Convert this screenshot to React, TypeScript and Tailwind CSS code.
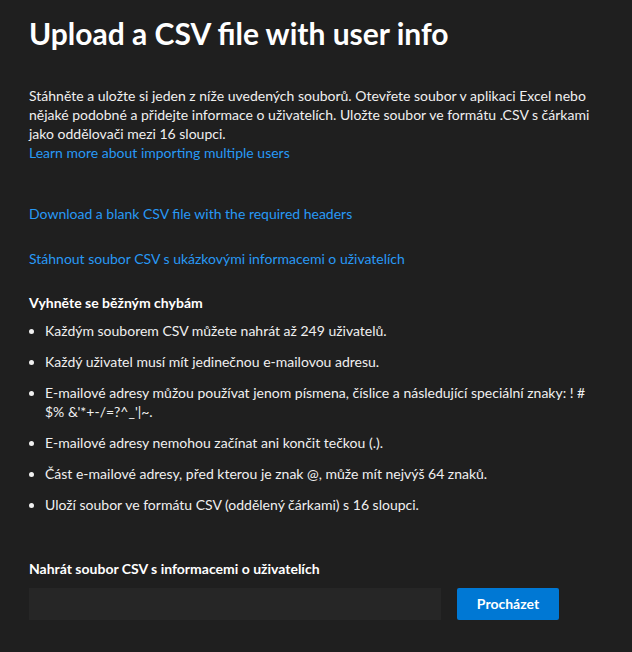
import React from "react";

const items: React.ReactNode[] = [
  "Každým souborem CSV můžete nahrát až 249 uživatelů.",
  "Každý uživatel musí mít jedinečnou e-mailovou adresu.",
  <>E-mailové adresy můžou používat jenom písmena, číslice a následující speciální znaky: ! #<br />$% &amp;'*+-/=?^_'|~.</>,
  "E-mailové adresy nemohou začínat ani končit tečkou (.).",
  "Část e-mailové adresy, před kterou je znak @, může mít nejvýš 64 znaků.",
  "Uloží soubor ve formátu CSV (oddělený čárkami) s 16 sloupci.",
];

export default function App() {
  return (
    <div
      className="w-[632px] h-[652px] bg-[#1f1f1f] text-[#f0f0f0] pl-[29px] pr-[20px] pt-[13px]"
      style={{ fontFamily: 'Lato, sans-serif' }}
    >
      <h1 className="text-[30px] leading-[40px] font-bold text-white">Upload a CSV file with user info</h1>
      <p className="mt-[33px] text-[14px] leading-[19px] text-[#f0f0f0]">
        Stáhněte a uložte si jeden z níže uvedených souborů. Otevřete soubor v aplikaci Excel nebo nějaké podobné a přidejte informace o uživatelích. Uložte soubor ve formátu .CSV s čárkami jako oddělovači mezi 16 sloupci.
      </p>
      <a className="block text-[14px] leading-[19px] text-[#2899f5]">Learn more about importing multiple users</a>
      <a className="block mt-[42px] text-[14px] leading-[19px] text-[#2899f5]">Download a blank CSV file with the required headers</a>
      <a className="block mt-[26px] text-[14px] leading-[19px] text-[#2899f5]">Stáhnout soubor CSV s ukázkovými informacemi o uživatelích</a>
      <h2 className="mt-[25px] text-[14px] leading-[19px] font-bold text-white">Vyhněte se běžným chybám</h2>
      <ul className="mt-[2.5px] list-disc pl-[16px] text-[14px] leading-[19px] text-[#f0f0f0]">
        {items.map((it, i) => (
          <li key={i} className="py-[6px]">{it}</li>
        ))}
      </ul>
      <div className="mt-[39px] text-[14px] leading-[19px] font-bold text-white">Nahrát soubor CSV s informacemi o uživatelích</div>
      <div className="mt-[10px] flex gap-[16px]">
        <div className="w-[412px] h-[32px] bg-[#262626]" />
        <button className="w-[102px] h-[32px] bg-[#0078d4] rounded-[2px] text-white text-[14px] font-bold">Procházet</button>
      </div>
    </div>
  );
}
